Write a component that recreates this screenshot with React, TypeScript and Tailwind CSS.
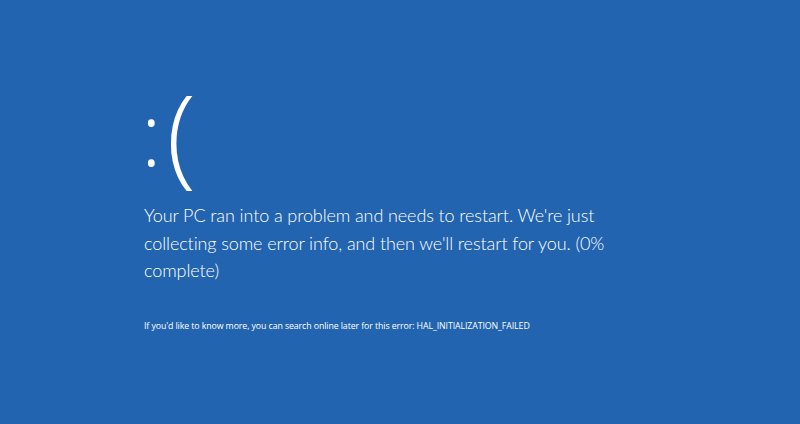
export default function App() {
  return (
    <div className="h-[424px] w-[800px] overflow-hidden bg-[#2264b0] text-white [font-family:Lato,sans-serif]">
      <div className="flex flex-col pl-[144px] pt-[81px]">
        <div className="flex h-[104px] items-center font-light [font-family:'Open_Sans',sans-serif]">
          <span className="-ml-[3px] text-[86px] leading-none">:</span>
          <span className="ml-[5px] text-[108px] leading-none">(</span>
        </div>
        <p className="mt-[17px] w-[470px] text-[18px] font-light leading-[27.5px] tracking-[-0.1px]">
          Your PC ran into a problem and needs to restart. We're just collecting some error info, and then we'll restart for you. (0% complete)
        </p>
        <p className="mt-[34px] text-[8.8px] leading-[14px] tracking-[-0.1px] [font-family:'Open_Sans',sans-serif]">
          If you'd like to know more, you can search online later for this error: HAL_INITIALIZATION_FAILED
        </p>
      </div>
    </div>
  )
}
